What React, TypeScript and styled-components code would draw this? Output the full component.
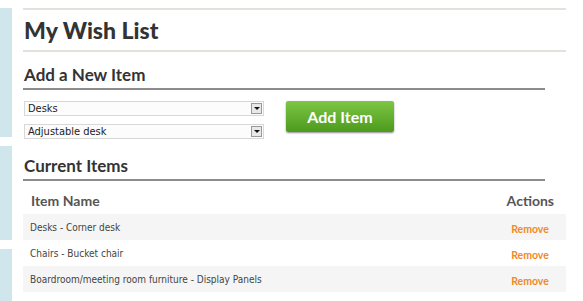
import React, { useState } from 'react';
import styled, { createGlobalStyle } from 'styled-components';

const GlobalStyle = createGlobalStyle`
  html, body {
    margin: 0;
    padding: 0;
    background: #fff;
  }
  body {
    font-family: 'DejaVu Sans Condensed', 'DejaVu Sans', sans-serif;
    color: #444;
  }
`;

const Page = styled.div`
  display: flex;
  width: 583px;
  height: 301px;
  overflow: hidden;
`;

const Sidebar = styled.div`
  display: flex;
  flex-direction: column;
  gap: 9px;
  width: 12px;
  padding-top: 8px;
`;

const SideBlock = styled.div<{ $h: number }>`
  height: ${(p) => p.$h}px;
  flex-shrink: 0;
  background: #cfe6ec;
`;

const Main = styled.div`
  flex: 1;
  padding: 8px 17px 0 11px;
`;

const Title = styled.h1`
  margin: 0;
  padding: 6px 0 6px 1px;
  border-top: 2px solid #e2e2dc;
  border-bottom: 2px solid #e2e2dc;
  font-family: 'Lato', sans-serif;
  font-weight: 900;
  font-size: 23px;
  line-height: 28px;
  color: #333;
`;

const Section = styled.div<{ $top: number }>`
  width: 522px;
  margin-top: ${(p) => p.$top}px;
`;

const SectionTitle = styled.h2`
  margin: 0;
  padding: 0 0 2px 1px;
  border-bottom: 2px solid #8c8c8c;
  font-family: 'Lato', sans-serif;
  font-weight: 700;
  font-size: 17px;
  line-height: 22px;
  color: #333;
`;

const AddForm = styled.div`
  display: flex;
  align-items: flex-start;
  gap: 22px;
  margin-top: 11px;
  padding-left: 1px;
`;

const Selects = styled.div`
  display: flex;
  flex-direction: column;
  gap: 8px;
`;

const SelectBox = styled.div`
  display: flex;
  align-items: center;
  justify-content: space-between;
  width: 234px;
  height: 13px;
  padding: 0 1px 0 3px;
  border: 1px solid #d8d8d8;
  background: #fcfcfc;
  font-size: 11px;
  color: #222;
`;

const Arrow = styled.span`
  display: flex;
  align-items: center;
  justify-content: center;
  width: 9px;
  height: 9px;
  border: 1px solid #999;
  background: #e8e8e8;
  &::after {
    content: '';
    border-left: 3px solid transparent;
    border-right: 3px solid transparent;
    border-top: 3px solid #111;
  }
`;

const AddButton = styled.button`
  width: 108px;
  height: 31px;
  border: none;
  border-radius: 2px;
  background: linear-gradient(#7ec645, #4c9a1c);
  box-shadow: 0 1px 2px rgba(0, 0, 0, 0.45);
  color: #fff;
  font-family: 'Lato', sans-serif;
  font-weight: 700;
  font-size: 16px;
  cursor: pointer;
`;

const Table = styled.table`
  width: 543px;
  margin-top: 5px;
  border-collapse: collapse;
`;

const Th = styled.th<{ $right?: boolean }>`
  height: 28px;
  padding: 0 ${(p) => (p.$right ? '12px' : '8px')};
  text-align: ${(p) => (p.$right ? 'right' : 'left')};
  font-family: 'Lato', sans-serif;
  font-weight: 700;
  font-size: 14px;
  color: #555;
`;

const Row = styled.tr<{ $shade: boolean }>`
  background: ${(p) => (p.$shade ? '#f5f5f5' : '#fff')};
`;

const Td = styled.td`
  height: 26px;
  padding: 0 7px;
  font-size: 10px;
  color: #444;
`;

const RemoveCell = styled.td`
  width: 70px;
  text-align: center;
`;

const RemoveLink = styled.a`
  font-family: 'Lato', sans-serif;
  font-weight: 700;
  font-size: 10.5px;
  color: #f0892a;
  cursor: pointer;
`;

const initialItems = [
  'Desks - Corner desk',
  'Chairs - Bucket chair',
  'Boardroom/meeting room furniture - Display Panels',
  'Desks - Adjustable desk',
];

export default function App() {
  const [items, setItems] = useState(initialItems);

  return (
    <>
      <GlobalStyle />
      <Page>
        <Sidebar>
          <SideBlock $h={129} />
          <SideBlock $h={94} />
          <SideBlock $h={60} />
        </Sidebar>
        <Main>
          <Title>My Wish List</Title>
          <Section $top={12}>
            <SectionTitle>Add a New Item</SectionTitle>
            <AddForm>
              <Selects>
                <SelectBox>
                  Desks
                  <Arrow />
                </SelectBox>
                <SelectBox>
                  Adjustable desk
                  <Arrow />
                </SelectBox>
              </Selects>
              <AddButton>Add Item</AddButton>
            </AddForm>
          </Section>
          <Section $top={16}>
            <SectionTitle>Current Items</SectionTitle>
          </Section>
          <Table>
            <thead>
              <tr>
                <Th>Item Name</Th>
                <Th $right>Actions</Th>
              </tr>
            </thead>
            <tbody>
              {items.map((it, i) => (
                <Row key={it} $shade={i % 2 === 0}>
                  <Td>{it}</Td>
                  <RemoveCell>
                    <RemoveLink onClick={() => setItems(items.filter((x) => x !== it))}>
                      Remove
                    </RemoveLink>
                  </RemoveCell>
                </Row>
              ))}
            </tbody>
          </Table>
        </Main>
      </Page>
    </>
  );
}
